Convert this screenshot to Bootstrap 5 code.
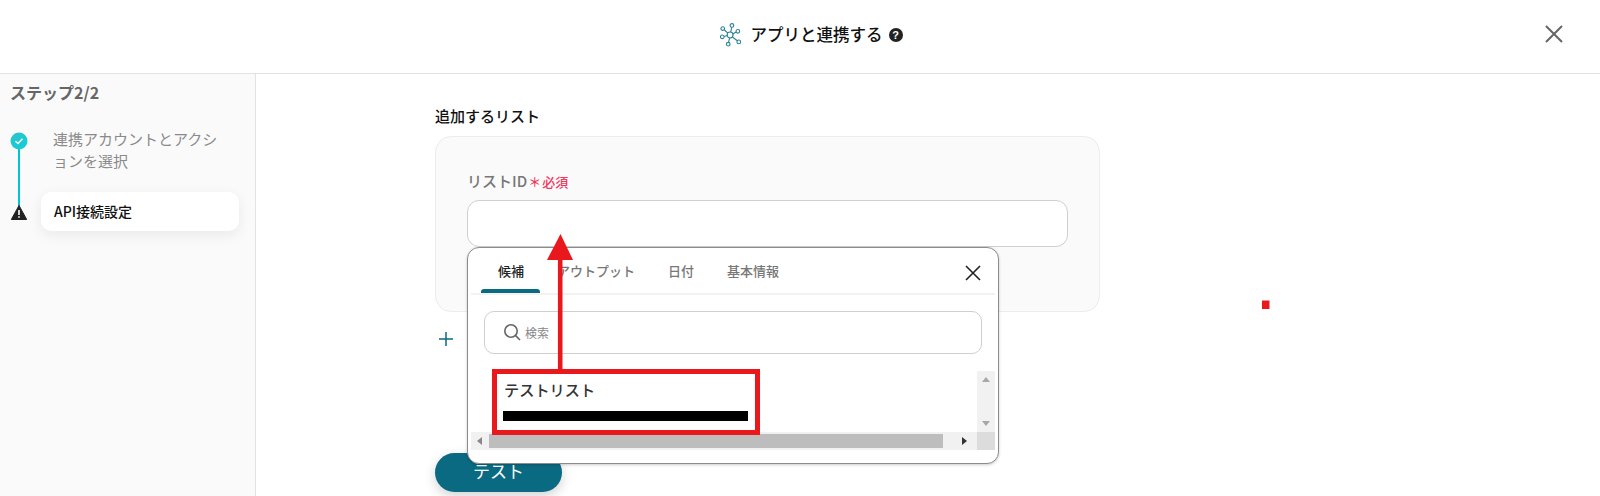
<!DOCTYPE html>
<html lang="ja">
<head>
<meta charset="utf-8">
<title>アプリと連携する</title>
<link href="https://cdn.jsdelivr.net/npm/bootstrap@5.3.0/dist/css/bootstrap.min.css" rel="stylesheet">
<style>
html,body{height:496px;overflow:hidden}
body{font-family:"Noto Sans CJK JP","Noto Sans",sans-serif;color:#222;background:#fff;position:relative}
.top-bar{height:74px;border-bottom:1px solid #e3e3e3;position:relative;padding:0 0 4px 22px;gap:7px}
.top-title{font-size:16.5px;font-weight:500;color:#111;line-height:1;padding-left:2px}
.top-close{position:absolute;left:1545px;top:25px;display:block}
.help-dot{width:14px;height:14px;border-radius:50%;background:#222;color:#fff;font:700 11px/14px "Liberation Sans",sans-serif;text-align:center;margin-left:2px}
.work-area{height:422px}
.side-pane{width:256px;flex:none;background:#fafafa;border-right:1px solid #e3e3e3;padding:7px 0 0 10px}
.step-head{font-size:16px;font-weight:700;color:#666;line-height:22px;margin:0 0 24px}
.step-track{position:relative;padding-left:31px}
.step-line{position:absolute;left:8px;top:13px;width:2px;height:66px;background:#00c4cf}
.step-check{position:absolute;left:0;top:5px}
.step-warn{position:absolute;left:1px;top:78px}
.step-done{font-size:15px;line-height:22px;color:#8a8a8a;padding:1px 0 0 12px;margin:0 0 20px;width:180px;word-break:break-all}
.step-now{width:198px;height:39px;background:#fff;border-radius:10px;box-shadow:0 4px 14px rgba(0,0,0,.07);font-size:14px;font-weight:500;color:#111;padding-left:13px;line-height:39px}
.main-pane{padding:31px 0 0 179px}
.sect-title{font-size:15px;font-weight:500;color:#111;line-height:22px;margin:0 0 9px}
.field-box{width:665px;height:176px;background:#fafafa;border:1px solid #ececec;border-radius:16px;padding:33px 31px 0}
.field-label{font-size:15px;font-weight:500;color:#777;line-height:22px;margin-bottom:7px}
.field-star{color:#f0395f;font-size:13px;margin-left:1px}
.field-must{color:#f0395f;font-size:13px;font-weight:500;margin-left:1px}
.field-wrap{position:relative;width:601px}
.field-input{height:47px;border:1px solid #cfcfcf;border-radius:12px;background:#fff}
.add-row{height:53px;padding-left:4px;display:flex;align-items:center}
.run-btn{width:127px;height:39px;margin-top:88px;background:#0a6a82;border:0;border-radius:20px;color:#fff;font-size:17px;line-height:36px;padding:0 0 3px;box-shadow:0 4px 12px rgba(0,0,0,.18);display:block}
.pick-pop{position:absolute;left:0;top:47px;width:532px;height:217px;background:#fff;border:1px solid #8c8c8c;border-radius:12px;box-shadow:0 1px 3px rgba(0,0,0,.2);z-index:5;padding:0 3px}
.pick-tabs{height:47px;border-bottom:2px solid #f2f2f2;font-size:13px;font-weight:500;color:#777;position:relative;padding-left:27px;gap:33px}
.pick-tab{line-height:45px}
.pick-on{color:#222;position:relative}
.pick-on::after{content:"";position:absolute;left:-17px;width:59px;height:4px;bottom:0;background:#0a6a82;border-radius:3px 3px 0 0}
.pick-x{position:absolute;right:14px;top:17px}
.pick-search{margin:16px 13px 0 13px;height:43px;border:1px solid #cfcfcf;border-radius:10px;padding-left:18px;gap:3px;font-size:12px;color:#888}
.pick-list{height:79px;margin-top:17px;display:grid;grid-template-columns:1fr 18px;grid-template-rows:61px 18px}
.pick-items{padding:6px 0 0 33px;overflow:hidden}
.pick-name{font-size:15.2px;font-weight:500;color:#333;line-height:24px;margin-bottom:10px}
.pick-bar{width:245px;height:10px;background:#000;margin-left:-1px}
.bar-v{background:#f1f1f1;display:flex;flex-direction:column;justify-content:space-between;align-items:center;padding:6px 0}
.bar-h{background:#f1f1f1;display:flex;align-items:center;justify-content:space-between;padding-right:10px}
.bar-thumb{width:454px;height:14px;background:#bdbdbd;margin-left:18px}
.bar-corner{background:#dcdcdc}
.tri-u{width:0;height:0;border:4px solid transparent;border-top:0;border-bottom:5px solid #a8a8a8}
.tri-d{width:0;height:0;border:4px solid transparent;border-bottom:0;border-top:5px solid #a8a8a8}
.tri-l{position:absolute;margin-left:6px;width:0;height:0;border:4px solid transparent;border-left:0;border-right:5px solid #888}
.tri-r{width:0;height:0;border:4px solid transparent;border-right:0;border-left:5px solid #333}
.mark-layer{position:absolute;left:0;top:0;z-index:10;pointer-events:none}
</style>
</head>
<body>
<header class="top-bar d-flex align-items-center justify-content-center">
  <svg width="22" height="24" viewBox="0 0 24 26" fill="none" stroke="#2b8096" stroke-width="1.2">
    <circle cx="11" cy="13" r="3.2"/>
    <circle cx="13" cy="2.6" r="2"/><circle cx="19.5" cy="9" r="2"/><circle cx="20.500" cy="20.500" r="2"/>
    <circle cx="9" cy="23" r="2"/><circle cx="2.5" cy="15" r="2"/><circle cx="3" cy="6" r="2"/>
    <path d="M11.6 10 12.8 4.6M14 12 17.6 9.7M13.400 15.200 19 19.200M10.500 16.200 9.300 21M7.900 13.600 4.500 14.700M8.600 11 4.500 7.300"/>
  </svg>
  <div class="d-flex align-items-center gap-1">
    <span class="top-title">アプリと連携する</span>
    <span class="help-dot">?</span>
  </div>
  <svg class="top-close" width="18" height="18" viewBox="0 0 18 18" stroke="#666" stroke-width="2"><path d="M1 1 17 17M17 1 1 17"/></svg>
</header>
<div class="work-area d-flex">
  <aside class="side-pane">
    <p class="step-head">ステップ2/2</p>
    <div class="step-track">
      <span class="step-line"></span>
      <svg class="step-check" width="18" height="18" viewBox="0 0 18 18">
        <defs><linearGradient id="chk" x1="0" y1="0" x2="1" y2="1"><stop offset="0" stop-color="#2fc4c8"/><stop offset="1" stop-color="#10cddb"/></linearGradient></defs>
        <circle cx="9" cy="9" r="8.5" fill="url(#chk)"/><path d="M5.5 9.2 8 11.5 12.5 6.8" fill="none" stroke="#fff" stroke-width="1.5"/>
      </svg>
      <svg class="step-warn" width="16" height="15" viewBox="0 0 16 15">
        <path d="M8 .5 15.7 14.500H.3Z" fill="#222" stroke="#222" stroke-linejoin="round"/><path d="M8 5v5M8 11.2v1.6" stroke="#fff" stroke-width="1.6"/>
      </svg>
      <p class="step-done">連携アカウントとアクションを選択</p>
      <div class="step-now">API接続設定</div>
    </div>
  </aside>
  <main class="main-pane flex-grow-1">
    <h2 class="sect-title">追加するリスト</h2>
    <div class="field-box">
      <div class="field-label">リストID<span class="field-star">＊</span><span class="field-must">必須</span></div>
      <div class="field-wrap">
        <div class="field-input"></div>
        <div class="pick-pop">
          <div class="pick-tabs d-flex">
            <span class="pick-tab pick-on">候補</span>
            <span class="pick-tab">アウトプット</span>
            <span class="pick-tab">日付</span>
            <span class="pick-tab">基本情報</span>
            <svg class="pick-x" width="16" height="16" viewBox="0 0 16 16" stroke="#222" stroke-width="1.6"><path d="M1 1 15 15M15 1 1 15"/></svg>
          </div>
          <div class="pick-search d-flex align-items-center">
            <svg width="19" height="19" viewBox="0 0 19 19" fill="none" stroke="#666" stroke-width="1.6"><circle cx="8" cy="8" r="6.2"/><path d="M12.6 12.6 17 17"/></svg>
            <span>検索</span>
          </div>
          <div class="pick-list">
            <div class="pick-items">
              <div class="pick-name">テストリスト</div>
              <div class="pick-bar"></div>
            </div>
            <div class="bar-v"><span class="tri-u"></span><span class="tri-d"></span></div>
            <div class="bar-h"><span class="tri-l"></span><span class="bar-thumb"></span><span class="tri-r"></span></div>
            <div class="bar-corner"></div>
          </div>
        </div>
      </div>
    </div>
    <div class="add-row">
      <svg width="14" height="14" viewBox="0 0 14 14" stroke="#0a6a82" stroke-width="1.5"><path d="M7 0V14M0 7H14"/></svg>
    </div>
    <button class="run-btn" type="button">テスト</button>
  </main>
</div>
<svg class="mark-layer" width="1600" height="496" viewBox="0 0 1600 496">
  <rect x="494.5" y="371.5" width="263" height="61" fill="none" stroke="#e9181c" stroke-width="5"/>
  <path d="M560.2 369V258" stroke="#e9181c" stroke-width="4.6"/>
  <path d="M560.500 234 573 260H547Z" fill="#e9181c"/>
  <rect x="1262" y="300.5" width="7.5" height="8.5" fill="#e9181c"/>
</svg>
<script src="https://cdn.jsdelivr.net/npm/bootstrap@5.3.0/dist/js/bootstrap.bundle.min.js"></script>
</body>
</html>
